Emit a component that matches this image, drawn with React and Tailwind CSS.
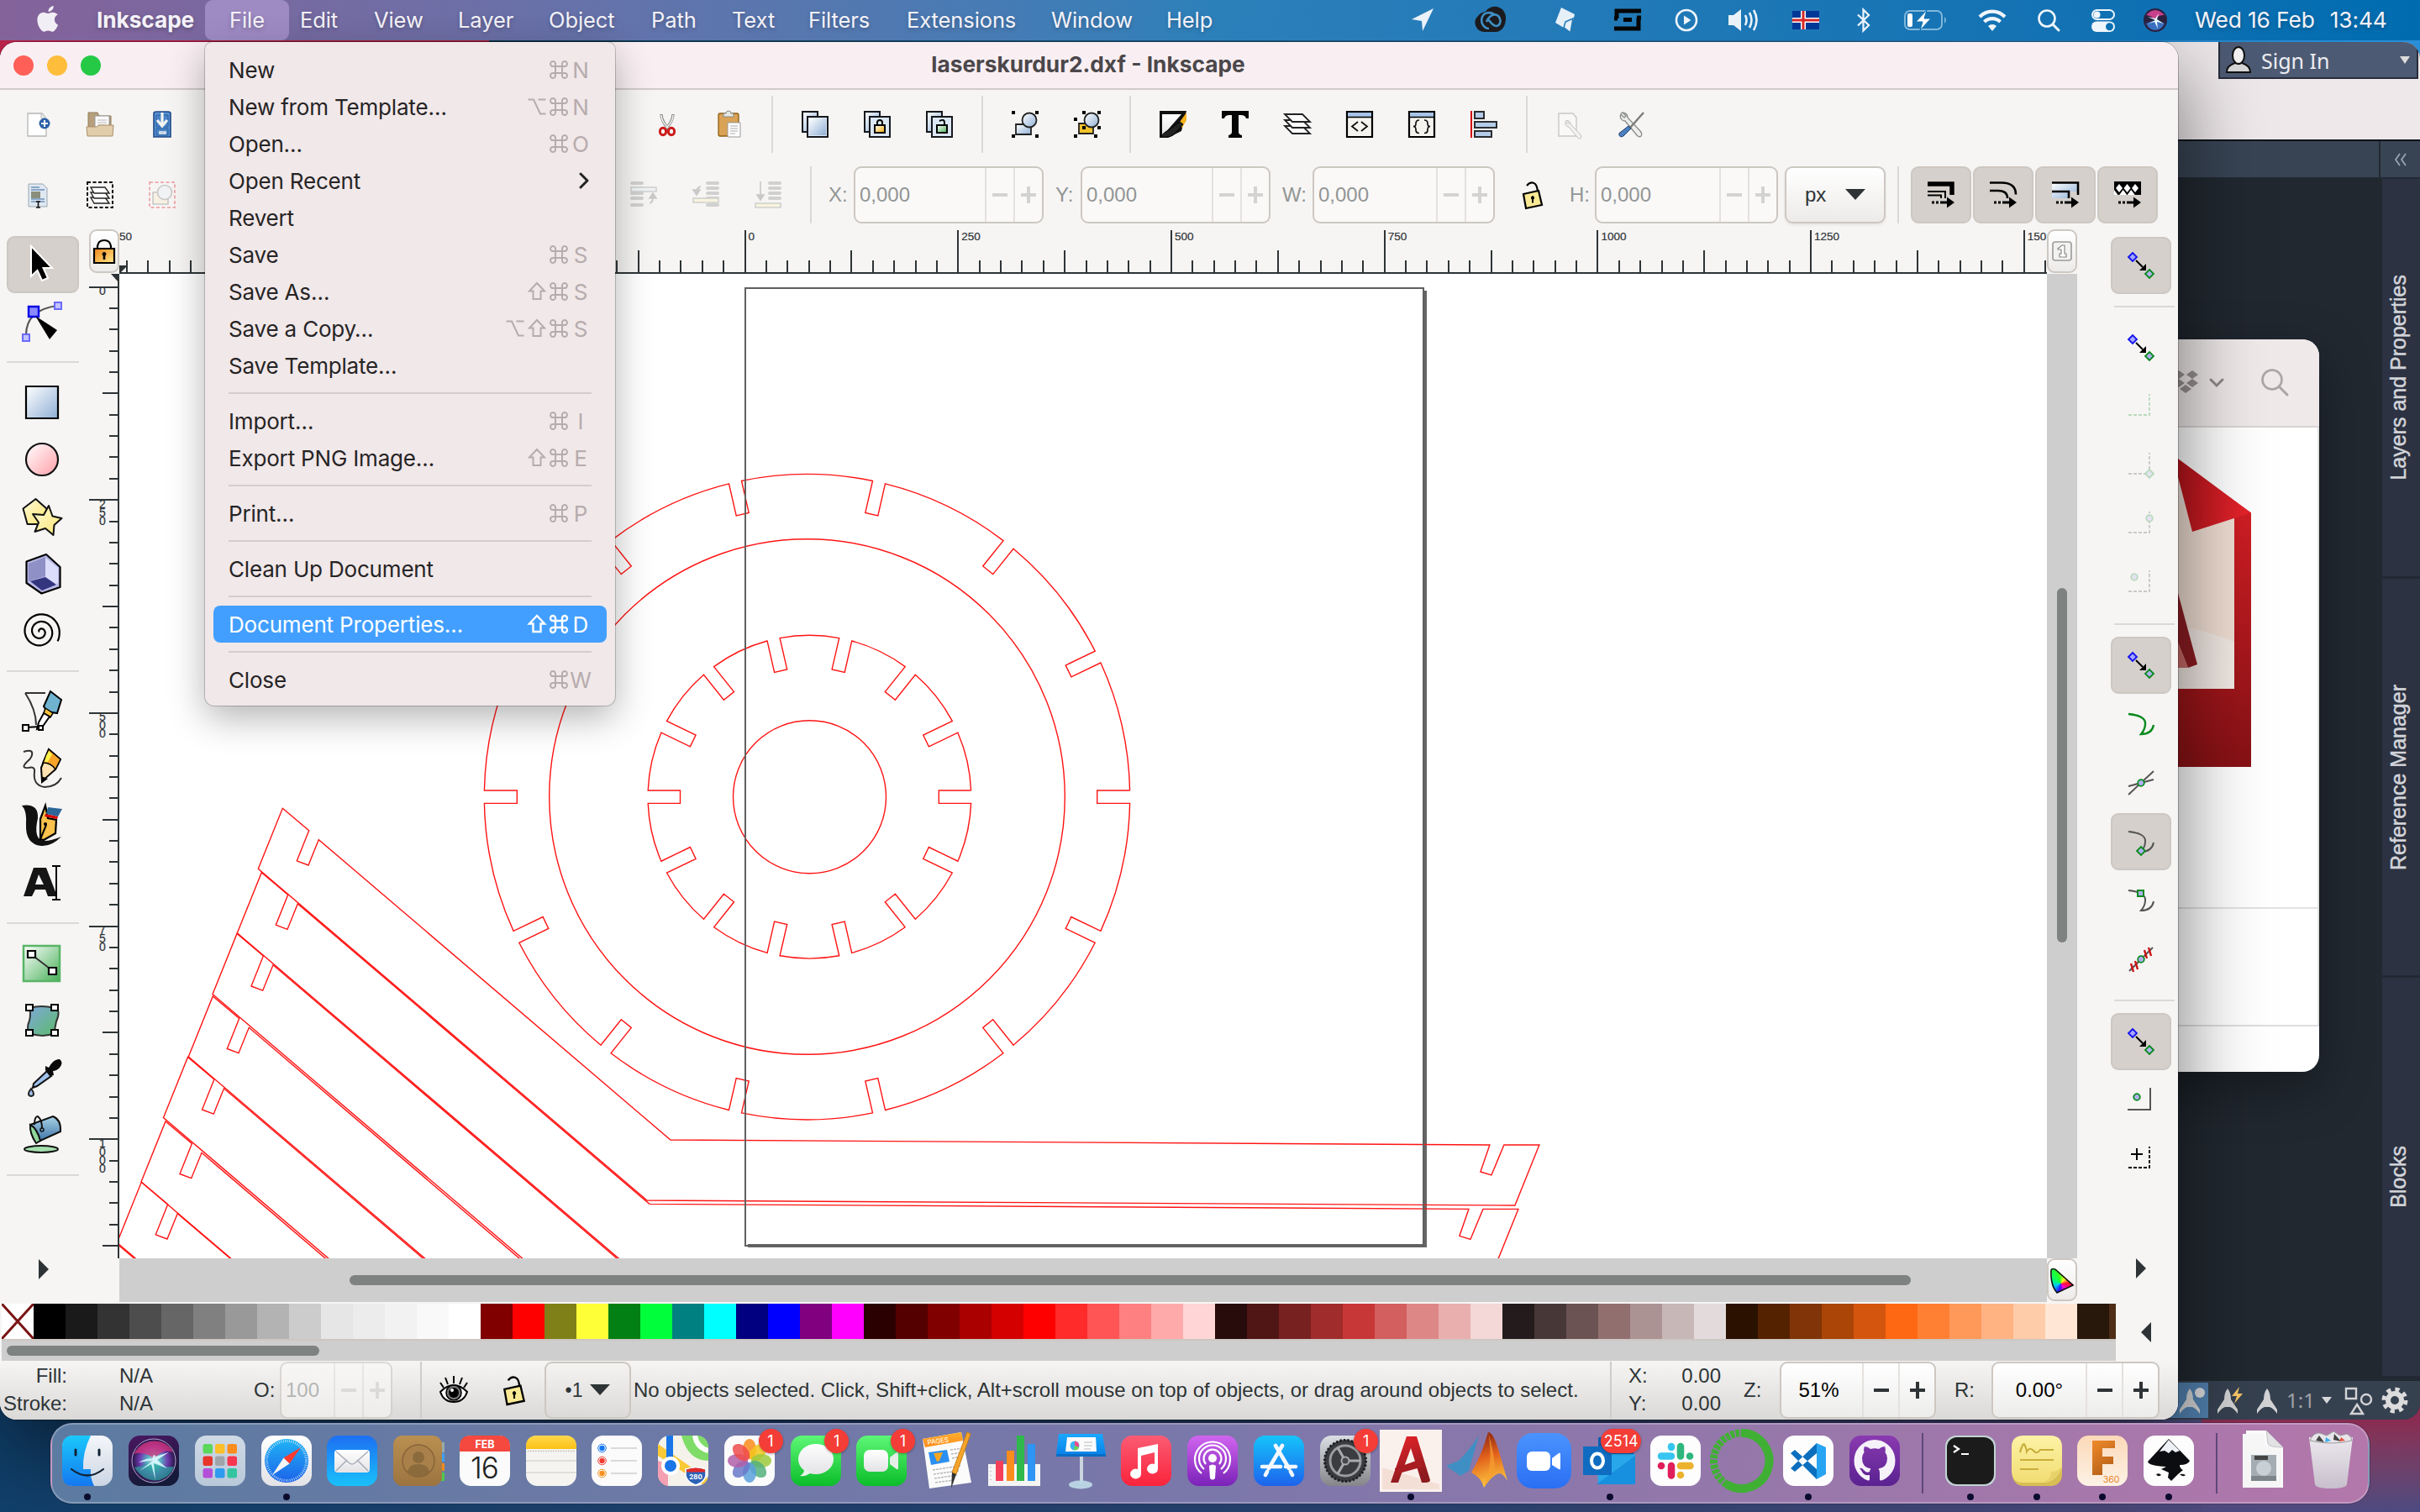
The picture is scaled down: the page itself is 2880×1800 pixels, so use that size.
import React from 'react';

/* ---------- helpers ---------- */
const Ico = ({ s = 32, vb, className = '', children }) => (
  <svg width={s} height={s} viewBox={vb || `0 0 ${s} ${s}`} className={'shrink-0 overflow-visible ' + className} fill="none">
    {children}
  </svg>
);

const G = ({ id, c, x2 = 0, y2 = 1 }) => (
  <linearGradient id={id} x1="0" y1="0" x2={x2} y2={y2}>
    {c.map((k, i) => (
      <stop key={i} offset={i / (c.length - 1)} stopColor={k} />
    ))}
  </linearGradient>
);

const Defs = () => (
  <svg className="absolute h-0 w-0">
    <defs>
      <G id="blueFace" c={['#ffffff', '#8fb0d6']} x2={1} />
      <G id="pinkFace" c={['#ffffff', '#ff9fa8']} x2={1} />
      <G id="yellowFace" c={['#fffbe0', '#fbe46a']} x2={1} />
      <G id="orangeFace" c={['#ffffff', '#f7a900']} x2={1} />
      <G id="lockFace" c={['#f0861a', '#ffe98a']} x2={1} />
      <G id="greenFace" c={['#ffffff', '#48b058']} x2={1} />
      <G id="meshFace" c={['#7fa8dc', '#5cbb68']} x2={1} />
      <G id="bucketFace" c={['#a9d3e6', '#3f74a8']} />
      <G id="finderL" c={['#1ac8fc', '#1478f0']} />
      <G id="finderR" c={['#f4f6fa', '#ccd6e4']} />
      <G id="siriBg" c={['#4a1762', '#151a38']} x2={0.3} />
      <G id="launch" c={['#cfdae6', '#b9c8d9']} />
      <G id="mail" c={['#1d6ff2', '#19c1fb']} />
      <G id="safari" c={['#1fb4f6', '#1d62e8']} />
      <G id="white" c={['#ffffff', '#e3e3e6']} />
      <G id="brown" c={['#b98f51', '#9c7440']} />
      <G id="green" c={['#5df777', '#0bbd29']} />
      <G id="note" c={['#ffd84d', '#fbc115']} />
      <G id="music" c={['#fb5c74', '#fa233b']} />
      <G id="pod" c={['#d165ef', '#7a22b8']} />
      <G id="store" c={['#15c4fb', '#1d63ec']} />
      <G id="gear" c={['#dadee2', '#86868a']} />
      <G id="zoom" c={['#4a93ff', '#2a6ff3']} />
      <G id="acad" c={['#e8232a', '#8d1a1e']} x2={0.3} />
      <G id="matlab" c={['#7a1c10', '#e2601b', '#fbc23c']} x2={0.2} />
      <G id="git" c={['#8a3ab0', '#5a2290']} />
      <G id="sticky" c={['#fdf3a6', '#f2dd74']} />
      <G id="fusion" c={['#fbd9b8', '#fdf2e6']} />
      <G id="fusionF" c={['#f08a2a', '#b8631a']} x2={0.5} />
      <G id="keynote" c={['#1aa8ff', '#0a84e8']} />
      <G id="pagesHead" c={['#ffb02e', '#ff8b1a']} />
      <G id="trash" c={['#f2f2f4', '#c9c6cf']} />
      <G id="redDoc" c={['#ea2229', '#8a1216']} x2={0.05} />
      <G id="redFold" c={['#b5141b', '#e5232b']} x2={1} y2={0.1} />
      <G id="paper" c={['#e6dad4', '#f4ebe6']} x2={1} />
      <radialGradient id="siri">
        <stop offset="0" stopColor="#fff" />
        <stop offset=".3" stopColor="#5fd0d8" />
        <stop offset=".65" stopColor="#7a3fc0" />
        <stop offset="1" stopColor="#20143c" />
      </radialGradient>
    </defs>
  </svg>
);

/* ---------- menu bar ---------- */
const MENUS = [
  ['Edit', 'w-[88px]'],
  ['View', 'w-[100px]'],
  ['Layer', 'w-[108px]'],
  ['Object', 'w-[122px]'],
  ['Path', 'w-[96px]'],
  ['Text', 'w-[91px]'],
  ['Filters', 'w-[117px]'],
  ['Extensions', 'w-[172px]'],
  ['Window', 'w-[137px]'],
  ['Help', 'w-[60px]'],
];

const StatusIcon = ({ w, children }) => <div className={'flex justify-center ' + w}>{children}</div>;

const MenuBar = () => (
  <header className="relative flex h-[48px] w-[2880px] items-center bg-linear-to-r from-[#84629a] via-[#2c80ba] via-50% to-[#006cb0] font-['Inter'] text-[25.500px] tracking-[-0.1px] text-[#f4f2f8] [text-shadow:0_2px_5px_rgba(0,0,0,0.25)]">
    <div className="flex w-[115px] justify-center">
      <Ico s={34}>
        <path fill="#f2eef6" d="M23.6 1c.2 2-.6 3.900-1.800 5.300-1.200 1.400-3.100 2.400-4.900 2.300-.2-1.900.7-3.900 1.800-5.100C19.900 2.100 22 1.100 23.600 1zM29 12.300c-.3.200-4.100 2.200-4.100 6.500 0 5 4.400 6.700 4.500 6.800 0 .1-.7 2.400-2.300 4.700-1.400 2-2.900 4.100-5.100 4.100s-2.800-1.300-5.400-1.300c-2.500 0-3.400 1.300-5.500 1.300s-3.500-1.900-5.100-4.200C4.100 27.400 2.600 23.200 2.600 19.300c0-6.400 4.200-9.800 8.300-9.800 2.200 0 4 1.400 5.400 1.400 1.300 0 3.300-1.500 5.800-1.500.9 0 4.400.1 6.900 2.900z" transform="translate(1 -1) scale(.92)" />
      </Ico>
    </div>
    <div className="w-[129px] text-[26.300px] font-bold tracking-[-0.1px]">Inkscape</div>
    <div className="flex h-[48px] w-[100px] items-center justify-center rounded-[9px] bg-[#9f8bc4]">File</div>
    <nav className="flex pl-[13px]">
      {MENUS.map(([t, w]) => (
        <div key={t} className={w}>{t}</div>
      ))}
    </nav>
    <div className="ml-[205px] flex items-center">
      <StatusIcon w="w-[80px]">
        <Ico s={30}><path d="M28 1 15 28l-1-12L2 14z" fill="#eaf1f8" /></Ico>
      </StatusIcon>
      <StatusIcon w="w-[82px]">
        <Ico s={38}>
          <path d="M12 33a11 11 0 0 1-8-19 12 12 0 0 1 9-5 13 13 0 0 1 24 8c0 9-5 16-12 16z" fill="#1b1b1f" />
          <path d="M24 13c-5-5-13-3-15 2-3 8 3 14 8 14M14 21c3-7 9-11 14-7 4 4 3 11-2 12-5 0-7-5-10-8" stroke="#3f8fc4" strokeWidth="2.600" />
        </Ico>
      </StatusIcon>
      <StatusIcon w="w-[94px]">
        <Ico s={32}>
          <path d="M12 1 28 9l-3 12-7-4-3 8-10-6z" fill="#e6f0f8" />
          <path d="m17 18 9-4-3 17-8-6z" fill="#e6f0f8" stroke="#247bb6" strokeWidth="1.600" />
        </Ico>
      </StatusIcon>
      <StatusIcon w="w-[56px]">
        <Ico s={32}><path d="M32 5H3v9M29 13v13H0M0 14h4M32 13h-5M11 15.500h10" stroke="#050505" strokeWidth="5" /></Ico>
      </StatusIcon>
      <StatusIcon w="w-[84px]">
        <Ico s={28}><circle cx="14" cy="14" r="12" stroke="#eef4fa" strokeWidth="2.600" /><path d="M11 8.500 19.500 14 11 19.500z" fill="#eef4fa" /></Ico>
      </StatusIcon>
      <StatusIcon w="w-[52px]">
        <Ico s={38}>
          <path d="M1 13h6l9-7v26l-9-7H1z" fill="#eaf2f9" />
          <path d="M21 13q3 6 0 12M26 10q5 9 0 18M31 7q7 12 0 24" stroke="#eaf2f9" strokeWidth="2.600" />
        </Ico>
      </StatusIcon>
      <StatusIcon w="w-[96px]">
        <Ico s={32}>
          <path fill="#003897" d="M0 5h32v22H0z" />
          <path stroke="#fff" strokeWidth="6" d="M13 5v22M0 16h32" />
          <path stroke="#d72828" strokeWidth="3" d="M13 5v22M0 16h32" />
        </Ico>
      </StatusIcon>
      <StatusIcon w="w-[42px]">
        <Ico s={28}><path d="M7 7.500 20 20l-6.500 6.500v-25L20 8 7 20.500" stroke="#eaf3fa" strokeWidth="2.300" /></Ico>
      </StatusIcon>
      <div className="flex w-[106px] justify-center">
        <svg width="54" height="26" viewBox="0 0 54 26" fill="none">
          <rect x="2" y="2" width="44" height="22" rx="6" stroke="#7fb8dc" strokeWidth="2" />
          <rect x="5" y="5" width="6" height="16" rx="2" fill="#fff" />
          <path d="M49 9q4 4 0 8z" fill="#7fb8dc" />
          <path d="M28 1 15 15h8l-3 10 13-14h-8z" fill="#fff" stroke="#0a70b2" strokeWidth="1" />
        </svg>
      </div>
      <StatusIcon w="w-[51px]">
        <Ico s={34}>
          <path d="M2 13a21 21 0 0 1 30 0" stroke="#f0f6fb" strokeWidth="4.200" />
          <path d="M7.500 19a13.500 13.500 0 0 1 19 0" stroke="#f0f6fb" strokeWidth="4.200" />
          <path d="M17 30l-5-6a7 7 0 0 1 10 0z" fill="#f0f6fb" />
        </Ico>
      </StatusIcon>
      <StatusIcon w="w-[83px]">
        <Ico s={28}><circle cx="12" cy="12" r="9.500" stroke="#eef5fb" strokeWidth="2.600" /><path d="m19 19 7 7" stroke="#eef5fb" strokeWidth="3" strokeLinecap="round" /></Ico>
      </StatusIcon>
      <StatusIcon w="w-[47px]">
        <Ico s={30}>
          <rect x="2" y="3" width="26" height="11" rx="5.500" stroke="#eef5fb" strokeWidth="2" />
          <circle cx="7.500" cy="8.500" r="4" fill="#eef5fb" />
          <rect x="1" y="16.500" width="28" height="12.500" rx="6.200" fill="#eef5fb" />
          <circle cx="22.500" cy="22.700" r="4.500" fill="#0b70b2" />
        </Ico>
      </StatusIcon>
      <StatusIcon w="w-[77px]">
        <Ico s={28}>
          <circle cx="14" cy="14" r="14" fill="#2a2140" />
          <path d="M3 8q11-12 22 0-8-1-11 6Q9 8 3 8z" fill="#c8408c" />
          <path d="M3 18q4 8 11 8t11-8q-6-2-11-4-6 2-11 4z" fill="#3a6fc0" />
          <path d="M14 14 5 10l9 2 4-6-2 7 8 5-8-2 1 8-4-8-7 2z" fill="#e8fbff" />
        </Ico>
      </StatusIcon>
      <div className="flex gap-[18px] pl-[9px] text-[26.300px] whitespace-nowrap"><span>Wed 16 Feb</span><span>13:44</span></div>
    </div>
  </header>
);

/* ---------- File menu ---------- */
const FILE_MENU = [
  ['New', '⌘N'],
  ['New from Template…', '⌥⌘N'],
  ['Open…', '⌘O'],
  ['Open Recent', '>'],
  ['Revert', ''],
  ['Save', '⌘S'],
  ['Save As…', '⇧⌘S'],
  ['Save a Copy…', '⌥⇧⌘S'],
  ['Save Template…', ''],
  null,
  ['Import…', '⌘I'],
  ['Export PNG Image…', '⇧⌘E'],
  null,
  ['Print…', '⌘P'],
  null,
  ['Clean Up Document', ''],
  null,
  ['Document Properties…', '⇧⌘D', true],
  null,
  ['Close', '⌘W'],
];

const KEY_GLYPHS = {
  '⌘': (
    <path d="M8 8h8v8H8zM8 8H5.500A3 3 0 1 1 8 5.500zM16 8V5.500A3 3 0 1 1 18.500 8zM8 16v2.500A3 3 0 1 1 5.500 16zM16 16h2.500a3 3 0 1 1-2.500 2.500z" />
  ),
  '⌥': <path d="M1.500 3.500H8L16 20.500h6.500M13.500 3.500h9" />,
  '⇧': <path d="M12 2 3 11.500h4.500V21h9v-9.500H21z" />,
};

const FileMenu = () => (
  <div className="absolute top-[50px] left-[244px] h-[790px] w-[488px] rounded-[11px] rounded-t-[9px] bg-[#f1e8e9] px-[10px] pt-[11px] font-['Inter'] text-[26px] text-[#262425] shadow-[0_0_0_1px_rgba(0,0,0,0.2),0_14px_44px_rgba(0,0,0,0.3)]">
    {FILE_MENU.map((m, i) =>
      m ? (
        <div key={i} className={'flex h-[44px] items-center rounded-[8px] pr-[18px] pl-[18px] ' + (m[2] ? 'bg-[#429fff] text-white' : '')}>
          <span className="flex-1 tracking-[-0.18px]">{m[0]}</span>
          {m[1] === '>' ? (
            <Ico s={20} className="-mr-[2px]"><path d="m7 2 8 8-8 8" stroke="#222" strokeWidth="3" strokeLinecap="round" strokeLinejoin="round" transform="translate(-2)" /></Ico>
          ) : (
            [...m[1]].map((k, j) => (
              <span key={j} className={'flex w-[26px] justify-center ' + (m[2] ? 'text-white' : 'text-[#b6acad]')}>
                {KEY_GLYPHS[k] ? (
                  <svg width="24" height="24" viewBox="0 0 24 24" fill="none" stroke="currentColor" strokeWidth={m[2] ? 2.400 : 2}>{KEY_GLYPHS[k]}</svg>
                ) : k}
              </span>
            ))
          )}
        </div>
      ) : (
        <div key={i} className="flex h-[22px] items-center px-[18px]">
          <div className="h-[2px] w-full bg-[#d6cccd]" />
        </div>
      )
    )}
  </div>
);

/* ---------- command toolbar ---------- */
const Cell = ({ children, dim }) => (
  <div className={'flex w-[74px] justify-center ' + (dim ? 'opacity-35' : '')}>{children}</div>
);
const VSep = () => (
  <div className="flex w-[28px] justify-center">
    <div className="h-[68px] w-[2px] bg-[#dbd9d6]" />
  </div>
);

const Wrench = ({ c = '#8a8c8a' }) => (
  <path d="M3 3c3-2 8 0 8 5l15 16q3 4 1 6t-5-1L8 12C4 12 1 8 3 4l4 4 2-2-4-4z" fill="#eeeeec" stroke={c} strokeWidth="1.300" />
);

const DupBase = () => (
  <>
    <path d="M1 1h18v24H1z" fill="url(#blueFace)" stroke="#16181c" strokeWidth="2" />
    <path d="M7 7h24v24H7z" fill="#dbe7f4" stroke="#16181c" strokeWidth="2" />
  </>
);

const Marks = ({ pts, c = '#000' }) => pts.map(([x, y], i) => <path key={i} d={`M${x - 2} ${y - 2}h4v4h-4z`} fill={c} />);

const CommandBar = () => (
  <div className="flex h-[82px] shrink-0 items-center pl-[8px]">
    <Cell>
      <Ico>
        <path d="M4 3h17l5 6v21H4z" fill="#fff" stroke="#b5b7b3" strokeWidth="1.300" />
        <path d="M20 3v6h6" fill="#eee" stroke="#b5b7b3" />
        <circle cx="24" cy="15" r="6.500" fill="#2c62a8" />
        <path d="M20 15h8M24 11v8" stroke="#fff" strokeWidth="2" />
      </Ico>
    </Cell>
    <Cell>
      <Ico>
        <path d="M2 2h11l2 4h14v23H2z" fill="#b79f7c" stroke="#8f7a59" />
        <path d="M10 6h17v18H10z" fill="#fafafa" stroke="#999" />
        <path d="M13 11h11M13 14h11M13 17h9" stroke="#b5b5b5" strokeWidth="1.200" />
        <path d="M0 19h12l3-2h17l-1 13H1z" fill="#e2cdab" stroke="#a98f66" />
      </Ico>
    </Cell>
    <Cell>
      <Ico>
        <path d="M6 3q0-2 3-2h14q3 0 3 2v28H6z" fill="#5590d0" stroke="#1f4a87" strokeWidth="1.600" />
        <path d="M9 5h14v14H9zM9 21h14v8H9z" fill="#4a85c8" stroke="#2c5f9e" />
        <path d="M13 25v2h7v-2z" stroke="#eee" strokeWidth="1.500" />
        <path d="M16 2v14M10 11l6 7 6-7" stroke="#f4f4f2" strokeWidth="3.200" />
      </Ico>
    </Cell>
    <div className="w-[527px]" />
    <Cell>
      <Ico>
        <path d="M9 4q0 8 9 18M23 4q0 8-9 18" stroke="#8b8e8b" strokeWidth="3.400" />
        <path d="M9 5q0 8 9 16M23 5q0 8-9 16" stroke="#eeeeec" strokeWidth="1.600" />
        <ellipse cx="11" cy="24.500" rx="3.600" ry="4.300" stroke="#cc1a1a" strokeWidth="3" />
        <ellipse cx="21" cy="24.500" rx="3.600" ry="4.300" stroke="#cc1a1a" strokeWidth="3" />
      </Ico>
    </Cell>
    <Cell>
      <Ico>
        <rect x="3" y="3" width="24" height="27" rx="2" fill="#d9a256" stroke="#8f5d12" strokeWidth="1.300" />
        <path d="M9 7V3h3q0-3 3-3t3 3h3v4z" fill="#e6e6e3" stroke="#888a85" />
        <path d="M14 14h15v17H14z" fill="#fff" stroke="#999" />
        <path d="M17 18h9M17 21h9M17 24h9M17 27h6" stroke="#aaa" strokeWidth="1.200" />
      </Ico>
    </Cell>
    <VSep />
    <Cell><Ico><DupBase /><path d="M9 9h20v20H9z" fill="url(#blueFace)" /></Ico></Cell>
    <Cell>
      <Ico>
        <DupBase />
        <path d="M16 17v-3q0-3 3-3t3 3v3" stroke="#000" strokeWidth="2" />
        <path d="M13 17h12v9H13z" fill="url(#orangeFace)" stroke="#000" strokeWidth="2" />
      </Ico>
    </Cell>
    <Cell>
      <Ico>
        <DupBase />
        <path d="M16 12q6-3 6 2v3" stroke="#000" strokeWidth="2" />
        <path d="M13 17h12v9H13z" fill="url(#greenFace)" stroke="#000" strokeWidth="2" />
      </Ico>
    </Cell>
    <VSep />
    <Cell>
      <Ico>
        <path d="M5 16h18v12H5z" fill="url(#blueFace)" stroke="#222" strokeWidth="1.800" />
        <circle cx="21" cy="11" r="8.500" fill="url(#blueFace)" stroke="#222" strokeWidth="1.800" />
        <Marks pts={[[2, 2], [30, 2], [2, 30], [30, 30]]} />
      </Ico>
    </Cell>
    <Cell>
      <Ico>
        <path d="M6 15h17v12H6z" fill="#f3c32c" stroke="#222" strokeWidth="1.800" />
        <circle cx="21" cy="11" r="8.500" fill="url(#blueFace)" stroke="#222" strokeWidth="1.800" />
        <Marks pts={[[12, 2], [30, 2], [2, 10], [12, 20], [30, 20], [2, 30], [26, 30]]} />
      </Ico>
    </Cell>
    <VSep />
    <Cell>
      <Ico>
        <path d="M0 0h32l-6 24L10 32H0z" fill="#111" />
        <path d="M3 4h23L12 20 3 30z" fill="url(#white)" />
        <path d="M32 2 22 16l5 4 5-9z" fill="#f5b21c" />
        <path d="M24 13 12 22Q4 26 1 31q14 2 19-6l8-9z" fill="#222" stroke="#000" />
      </Ico>
    </Cell>
    <Cell><Ico><path d="M0 0h32v9h-3q-1-4-6-4h-3v20q0 3 4 4v3H8v-3q4-1 4-4V5H9Q4 5 3 9H0z" fill="#050505" /></Ico></Cell>
    <Cell>
      <Ico>
        {[18, 11, 4].map((y) => (
          <path key={y} d={`M1 ${y}h21l9 9H10z`} fill="#fbfbfb" stroke="#222" strokeWidth="1.800" />
        ))}
      </Ico>
    </Cell>
    <Cell>
      <Ico>
        <path d="M1 1h30v30H1z" fill="#f4f3ee" stroke="#000" strokeWidth="2.200" />
        <path d="M2 2h28v5H2z" fill="#a8c4e6" /><path d="M0 7.500h32" stroke="#000" strokeWidth="1.500" />
        <path d="m14 13-7 5.500 7 5.500M18 13l7 5.500-7 5.500" stroke="#111" strokeWidth="1.800" />
      </Ico>
    </Cell>
    <Cell>
      <Ico>
        <path d="M1 1h30v30H1z" fill="#f4f3ee" stroke="#000" strokeWidth="2.200" />
        <path d="M2 2h28v5H2z" fill="#a8c4e6" /><path d="M0 7.500h32" stroke="#000" strokeWidth="1.500" />
        <path d="M13 11q-4 0-4 4t-3 3.500q3 0 3 4t4 4M19 11q4 0 4 4t3 3.500q-3 0-3 4t-4 4" stroke="#111" strokeWidth="1.700" />
      </Ico>
    </Cell>
    <Cell>
      <Ico>
        <path d="M1 0v32" stroke="#d40000" strokeWidth="2" />
        <path d="M5 1h11v8H5zM5 13h26v7H5zM5 24h20v7H5z" fill="#b4cce8" stroke="#2a2c30" strokeWidth="2" />
      </Ico>
    </Cell>
    <VSep />
    <Cell dim>
      <Ico><path d="M3 3h17l4 5v22H3z" fill="#fff" stroke="#777" strokeWidth="1.400" /><g transform="translate(9 10) scale(.75)"><Wrench c="#555" /></g></Ico>
    </Cell>
    <Cell>
      <Ico>
        <Wrench />
        <path d="M30 2 14 20" stroke="#7a7c7a" strokeWidth="2.400" />
        <path d="m12 18 3 3-9 9q-4 2-5-1t2-4z" fill="#4c80bf" stroke="#20406f" />
      </Ico>
    </Cell>
  </div>
);

/* ---------- tool controls bar ---------- */
const Spin = ({ w, value, dim, btn, align = 'pl-[5px]' }) => (
  <div className={`flex h-[68px] shrink-0 rounded-[9px] border-2 border-[#cdc7c2] ${w} ${dim ? 'bg-[#faf9f8] text-[#929595]' : 'bg-linear-to-b from-white to-[#ececeb] text-black'}`}>
    <div className={'flex flex-1 items-center ' + align}>{value}</div>
    {['M0 8h18', 'M0 8h18M9-2v20'].map((d, i) => (
      <div key={i} className={`flex items-center justify-center border-l-2 border-[#e4e1de] ${btn}`}>
        <svg width="20" height="16" viewBox="-1 0 20 16" className="overflow-visible"><path d={d} stroke={dim ? '#d3d3d1' : '#2e3436'} strokeWidth="4" /></svg>
      </div>
    ))}
  </div>
);

const Padlock = ({ s = 32 }) => (
  <Ico s={s} vb="0 0 32 32">
    <path d="M9 5q5-6 10-2 3 3 3 12" stroke="#000" strokeWidth="2.200" />
    <path d="m5 15 18-4 4 17-19 4z" fill="#fae994" stroke="#000" strokeWidth="2.200" />
    <path d="M16 17a2.500 2.500 0 0 1 1 4.500v4h-2v-4a2.500 2.500 0 0 1 1-4.500z" fill="#000" />
  </Ico>
);

const Toggle = ({ children }) => (
  <div className="flex h-[68px] w-[72px] items-center justify-center rounded-[9px] border-2 border-[#cdc7c2] bg-[#d5d0cc]">
    <Ico>
      {children}
      <path d="M5 25h3M10 25h3M15 25h10" stroke="#000" strokeWidth="3" />
      <path d="m23 18.500 9 6.500-9 6.500z" fill="#000" />
    </Ico>
  </div>
);

const RaiseLower = ({ flip, end }) => (
  <Ico>
    {[2, 8, 14, 20, 28].map((y) => (
      <path key={y} d={`M${flip ? 18 : 2} ${y}h12`} stroke="#8b8e8c" strokeWidth="4" strokeLinecap="round" />
    ))}
    <path d={`M1 ${end ? 26 : flip ? 20 : 7}h30v5H1z`} fill={flip ? '#fbf0b4' : '#e3edf8'} stroke="#8b8e8c" strokeWidth="1.600" />
    {flip ? <path d={end ? 'M7 0v18M3 16l4 6 4-6z' : 'M10 6q-5 1-5 6M1 10l4 6 4-6z'} stroke="#777" strokeWidth="1.600" fill="#777" /> : <path d="M23 26q4-1 4-6M23 20l4-6 4 6z" stroke="#777" strokeWidth="1.600" fill="#777" />}
  </Ico>
);

const ControlsBar = () => (
  <div className="flex h-[84px] shrink-0 items-center pt-[2px] pl-[8px] font-['Liberation_Sans'] text-[24px] text-[#929595]">
    <Cell>
      <Ico>
        <path d="M5 3h17l5 5v22H5z" fill="#dfe8f0" stroke="#9aa7b5" />
        <path d="M8 7h10M8 10h16M8 21h16M8 24h16" stroke="#88a7c8" strokeWidth="2" />
        <path d="M8 12h11v8H8z" fill="#8a8f7c" />
        <path d="M14 24h5M14 31h5M16.500 24v7" stroke="#111" strokeWidth="1.600" />
      </Ico>
    </Cell>
    <Cell>
      <Ico>
        <path d="M1 1h30v30H1z" stroke="#000" strokeWidth="2" strokeDasharray="4 2.500" />
        {[19, 13, 7].map((y) => (
          <path key={y} d={`M5 ${y}h17l5 7H9z`} fill="#fff" stroke="#222" strokeWidth="1.400" />
        ))}
      </Ico>
    </Cell>
    <Cell dim>
      <Ico>
        <path d="M1 1h30v30H1z" stroke="#e0323a" strokeWidth="2" strokeDasharray="4 2.500" />
        <path d="M5 13h18v14H5z" fill="#f7ecc0" stroke="#777" strokeWidth="1.600" />
        <circle cx="19" cy="13" r="8.500" fill="#e6edf4" stroke="#777" strokeWidth="1.600" />
      </Ico>
    </Cell>
    <div className="w-[499px]" />
    <Cell dim><RaiseLower /></Cell>
    <Cell dim><RaiseLower flip /></Cell>
    <Cell dim><RaiseLower flip end /></Cell>
    <VSep />
    <span className="w-[37px] pl-[7px]">X:</span>
    <Spin w="w-[226px]" btn="w-[34px]" value="0,000" dim />
    <span className="w-[44px] pl-[14px]">Y:</span>
    <Spin w="w-[226px]" btn="w-[34px]" value="0,000" dim />
    <span className="w-[50px] pl-[14px]">W:</span>
    <Spin w="w-[217px]" btn="w-[34px]" value="0,000" dim />
    <div className="flex w-[89px] justify-center"><Padlock /></div>
    <span className="w-[30px]">H:</span>
    <Spin w="w-[218px]" btn="w-[34px]" value="0,000" dim />
    <div className="ml-[8px] flex h-[68px] w-[120px] items-center justify-between rounded-[9px] border-2 border-[#cdc7c2] bg-linear-to-b from-white to-[#edebe9] pr-[22px] pl-[22px] text-[#2e3436] shadow-[0_2px_3px_rgba(0,0,0,0.07)]">
      px
      <svg width="24" height="14" viewBox="0 0 24 14"><path d="M0 0h24L12 13z" fill="#2e3436" /></svg>
    </div>
    <div className="flex w-[30px] justify-center"><div className="h-[68px] w-[2px] bg-[#dbd9d6]" /></div>
    <div className="flex gap-[2px]">
      <Toggle><path d="M0 3h29v13" stroke="#000" strokeWidth="5.500" /><path d="M0 12h21v8M0 16.500h16V20" stroke="#000" strokeWidth="2" /></Toggle>
      <Toggle><path d="M0 1.500h14q17 0 17 14M0 11h10q11 0 11 9" stroke="#000" strokeWidth="2.600" /></Toggle>
      <Toggle><path d="M0 1.500h31V12H20v8H0z" fill="url(#blueFace)" /><path d="M0 1.500h31V16M0 12h20v8" stroke="#000" strokeWidth="2.600" /></Toggle>
      <Toggle>
        <path d="M0 0h32v16H0z" fill="#000" />
        <path d="m6 3 4 5-4 5-4-5zM15.500 3l4 5-4 5-4-5zM25 3l4 5-4 5-4-5zM0 10l4.500 6H0zM10.700 10l4.500 6h-9zM20.200 10l4.500 6h-9z" fill="#fff" />
      </Toggle>
    </div>
  </div>
);

/* ---------- rulers and canvas ---------- */
const UNIT = 25.37;
const ORIGIN_X = 886.6;
const ORIGIN_Y = 341.5;

const HRuler = () => (
  <svg width="2294" height="54" viewBox="142 272 2294 54" className="shrink-0">
    <path d="M142 325h2294" stroke="#2e3436" strokeWidth="2" />
    {Array.from({ length: 91 }, (_, i) => i - 29).map((n) => {
      const x = Math.round(ORIGIN_X + n * UNIT);
      const top = n % 10 === 0 ? 274 : n % 5 === 0 ? 298 : 310;
      return <path key={n} d={`M${x} ${top}V324`} stroke="#2e3436" strokeWidth="2" />;
    })}
    {[[0, '0'], [250, '250'], [500, '500'], [750, '750'], [1000, '1000'], [1250, '1250'], [1500, '150']].map(([v, label]) => (
      <text key={v} x={ORIGIN_X + (v / 25) * UNIT + 4} y="286" fontSize="13.500" fill="#2e3436" stroke="#2e3436" strokeWidth=".2" fontFamily="Liberation Sans">{label}</text>
    ))}
    <text x="142" y="286" fontSize="13.500" fill="#2e3436" stroke="#2e3436" strokeWidth=".2" fontFamily="Liberation Sans">50</text>
    <path d="M142 316h10l-10 10z" fill="#2e3436" />
  </svg>
);

const VRuler = () => (
  <svg width="36" height="1172" viewBox="106 326 36 1172" className="shrink-0">
    <path d="M141 326v1172" stroke="#2e3436" strokeWidth="2" />
    {Array.from({ length: 46 }, (_, n) => n).map((n) => {
      const y = Math.round(ORIGIN_Y + n * UNIT);
      const left = n % 10 === 0 ? 106 : n % 5 === 0 ? 122 : 130;
      return <path key={n} d={`M${left} ${y}H141`} stroke="#2e3436" strokeWidth="2" />;
    })}
    {['0', '250', '500', '750', '1000'].map((label) => {
      const chars = [...label];
      const y0 = ORIGIN_Y + (Number(label) / 25) * UNIT + 9.5;
      return (
        <text key={label} x={chars.map(() => 118).join(' ')} y={chars.map((_, i) => y0 + i * 10).join(' ')} fontSize="14" fill="#2e3436" stroke="#2e3436" strokeWidth=".2" fontFamily="Liberation Sans">{label}</text>
      );
    })}
    <path d="M132 326h9v10z" fill="#2e3436" />
  </svg>
);

const gearPath = (cx, cy, r, depth) => {
  const h = 7.7;
  const count = 14;
  const a = Math.asin(h / r);
  let d = '';
  for (let i = 0; i < count; i++) {
    const t = (i * 2 * Math.PI) / count;
    const c = Math.cos(t);
    const s = Math.sin(t);
    const at = (x, y) => `${(cx + x * c - y * s).toFixed(1)} ${(cy + x * s + y * c).toFixed(1)}`;
    const edge = r * Math.cos(a);
    d += (i ? `A${r} ${r} 0 0 1 ` : 'M') + at(edge, -h) + 'L' + at(r - depth, -h) + 'L' + at(r - depth, h) + 'L' + at(edge, h);
  }
  return d + `A${r} ${r} 0 0 1 ${(cx + r * Math.cos(a)).toFixed(1)} ${cy - h}`;
};

const STRIPS = [[336.3, 962.3], [311.3, 1038.7], [282, 1111.5], [253.3, 1186], [223.5, 1258.5], [197, 1335], [168.3, 1407.3], [139.500, 1481]];

const stripPath = ([x, y]) =>
  `M${x} ${y}l31.400 26.500-14.400 36 13.700 5.200 12.300-30.400L${x + 461.6} ${y + 394.7}l975 6-11 32 13 4 15-36h42l-29 72-1033-6L${x - 29} ${y + 72}z`;

const Canvas = () => (
  <svg width="2294" height="1172" viewBox="142 326 2294 1172" className="shrink-0 bg-white" fill="none">
    <path d="M1694 346h4v1139H890v-4h804z" fill="#666" />
    <g stroke="#ff1414" strokeWidth="1.400">
      <path d={gearPath(960.5, 948.7, 384.2, 39)} />
      <circle cx="960.5" cy="948.500" r="306.800" />
      <path d={gearPath(963.4, 948.7, 192.4, 38.5)} />
      <circle cx="963.500" cy="948.700" r="91" />
      {STRIPS.map((p) => (
        <path key={p[0]} d={stripPath(p)} />
      ))}
    </g>
    <path d="M887 343h807v1140H887z" stroke="#5f5f5f" strokeWidth="2" />
  </svg>
);

const SmallButton = ({ h, children }) => (
  <div className={`flex w-[36px] items-center justify-center rounded-[9px] border-2 border-[#cdc7c2] bg-linear-to-b from-white to-[#edebe9] ${h}`}>{children}</div>
);

/* ---------- toolbox ---------- */
const HSep = ({ w }) => (
  <div className="flex h-[28px] items-center justify-center"><div className={'h-[2px] bg-[#dbd9d6] ' + w} /></div>
);

const spiral = Array.from({ length: 120 }, (_, i) => {
  const t = i / 119;
  const a = 0.5 - (1 - t) * Math.PI * 2 * 2.6;
  const r = 1 + 22.5 * t;
  return `${(22 + r * Math.cos(a)).toFixed(1)} ${(25 + r * Math.sin(a)).toFixed(1)}`;
}).join('L');

const TOOLS = [
  <path d="M11 2v36l7.500-7 5.500 12 7-3-5.500-12H36z" fill="#000" stroke="#fff" strokeWidth="2" />,
  <>
    <path d="M5 40Q5 10 42 5" stroke="#555" strokeWidth="2.200" />
    <path d="M8 6h12v12H8z" fill="#8a8aff" stroke="#0000e6" strokeWidth="2.400" />
    <path d="M39 1h8v8h-8zM1 39h8v8H1z" fill="#c3c3ff" stroke="#6a6aff" strokeWidth="2" />
    <path d="m16 17 26 17-9 11z" fill="#000" />
  </>,
  null,
  <path d="M5 5h38v38H5z" fill="url(#blueFace)" stroke="#000" strokeWidth="2.200" />,
  <circle cx="24" cy="24" r="19" fill="url(#pinkFace)" stroke="#111" strokeWidth="2.200" />,
  <g fill="url(#yellowFace)" stroke="#111" strokeWidth="2" strokeLinejoin="round">
    <path d="M16.500 3 1.500 14.500 6.600 33H22l8-18z" />
    <path d="m32 11 4.500 12.500 11 2.500-9 8-1 12-9.500-8L15.500 42 20 31l-7-10 13 1z" />
  </g>,
  <g strokeLinejoin="round">
    <path d="m29 1 16.500 15v24l-22 7.500L5.500 35V9.500z" fill="#b9b9e6" stroke="#000" strokeWidth="2.200" />
    <path d="M28 5v23l13 9 2-3V17z" fill="#dcdcfb" />
    <path d="m8 12 20-8v23L8 33z" fill="#8f90c6" />
    <path d="m28 28 13 9-17 7-14-11z" fill="#33357f" />
  </g>,
  <path d={'M' + spiral} stroke="#000" strokeWidth="2.200" />,
  null,
  <>
    <path d="M4 2h24M4 2q13 20 13 38" stroke="#333" strokeWidth="2" />
    <path d="m34 0 13 10-5 16-12-2-4-6z" fill="#6fb3cf" stroke="#000" strokeWidth="2" />
    <path d="m28 20 9 6-3 5-8-5z" fill="#f5c13a" stroke="#000" strokeWidth="1.500" />
    <path d="m26 26 7 4-9 13-6 2 2-8z" fill="#fff" stroke="#000" strokeWidth="2" />
    <path d="M4 43l18-1" stroke="#000" strokeWidth="2" />
    <path d="M1 40h7v7H1zM20 41h5v5h-5z" fill="#fff" stroke="#000" strokeWidth="2" />
  </>,
  <>
    <path d="M2 4q12-4 10 4-1 4-6 8-8 8 2 7 8-2 7 5-2 16 12 18 14 0 20-11" stroke="#333" strokeWidth="2" />
    <path d="m32 1 14 12-6 12-16 14-1-16z" fill="#ffe2b0" stroke="#000" strokeWidth="2" />
    <path d="m32 1 14 12-6 12q-5-8-15-8z" fill="#f8a428" stroke="#000" strokeWidth="1.500" />
    <path d="M32 3q-4 6-5 13h4l5-9z" fill="#fff04a" />
    <path d="M23 33v9l8-6z" fill="#000" />
  </>,
  <>
    <path d="M0 0q20-3 19 15-6 26 8 27 8 0 20-5-12 12-24 11Q4 46 5 22 6 6 0 0z" fill="#111" />
    <path d="m28 0-6 16v24l4 1 14-8 1-16-10-2z" fill="#fac24c" stroke="#000" strokeWidth="2.200" />
    <path d="M31 2l17 2-5 9-14-3z" fill="#2d6699" />
    <path d="M28 10l15 3-1 3-15-3z" fill="#d40000" />
    <path d="m22 40 7-17" stroke="#000" strokeWidth="2" /><circle cx="28" cy="22" r="2" fill="#000" />
  </>,
  <>
    <path d="M14 6h15l13 34H31l-3-8H16l-4 8H2zM20 14l-4 12h10z" fill="#151515" fillRule="evenodd" />
    <path d="M36 4h10M36 44h10M41 4v40" stroke="#000" strokeWidth="2" />
  </>,
  null,
  <>
    <path d="M2 3h43v42H2z" fill="url(#greenFace)" stroke="#58b565" strokeWidth="2.500" />
    <path d="m11 13 26 20" stroke="#333" strokeWidth="2" />
    <path d="M7 9h9v8H7zM32 29h9v8h-9z" fill="#fff" stroke="#000" strokeWidth="2.200" />
  </>,
  <>
    <path d="M9 9q14-4 30 0 8 2 2 16-2 8-2 14-14 6-30 0-4-6 0-15 2-8 0-15z" fill="url(#meshFace)" stroke="#333" strokeWidth="2" />
    <path d="M5 5h8v7H5zM35 5h8v7h-8zM5 35h8v7H5zM35 35h8v7h-8z" fill="#fff" stroke="#000" strokeWidth="2" />
  </>,
  <>
    <path d="m30 16 5 6-17 12-5 2 1-5z" fill="#9fc1ec" stroke="#111" strokeWidth="2" />
    <path d="M28 10l4 2Q38 1 45 2q5 4 0 10-4 4-8 4l1 5-5 1-5-7z" fill="#0a0a0a" />
    <path d="M11 37q-6 8 0 9 6-1 0-9z" fill="#9fc1ec" stroke="#222" strokeWidth="2" />
  </>,
  <>
    <path d="M10 12 37 2q10 4 9 18L22 31q-6-10-12-19z" fill="url(#bucketFace)" stroke="#111" strokeWidth="2" />
    <path d="M10 12q8 4 12 19l-5 3q-8-12-7-22z" fill="#8fd69b" stroke="#111" strokeWidth="2" />
    <path d="M15 12q0-10 4-10 5 4 5 14" stroke="#111" strokeWidth="2" />
    <ellipse cx="23" cy="41" rx="20" ry="4" fill="#a5dfae" stroke="#111" strokeWidth="2" />
    <circle cx="24" cy="18" r="2" stroke="#111" strokeWidth="1.500" />
  </>,
  null,
];

const Toolbox = () => (
  <div className="flex w-[106px] flex-col items-start pt-[9px] pl-[8px]">
    {TOOLS.map((t, i) =>
      t ? (
        <div key={i} className={'flex h-[68px] w-[86px] items-center justify-center ' + (i === 0 ? 'rounded-[9px] border-2 border-[#cdc7c2] bg-[#d5d0cc]' : '')}>
          <Ico s={48} className="-ml-[2px]">{t}</Ico>
        </div>
      ) : (
        <HSep key={i} w="w-[86px]" />
      )
    )}
    <svg width="12" height="24" viewBox="0 0 12 24" className="mt-[86px] ml-[38px]"><path d="M0 0l12 12L0 24z" fill="#2e3436" /></svg>
  </div>
);

/* ---------- snap bar ---------- */
const Diamond = ({ x, y, c }) => <path d={`M${x} ${y - 5}l5 5-5 5-5-5z`} fill={c === '#0a8a1e' ? '#b0b0f0' : '#a6a6ff'} stroke={c} strokeWidth="1.800" />;
const Dot = ({ x, y }) => <circle cx={x} cy={y} r="3.800" fill="#b0b0f0" stroke="#0a8a1e" strokeWidth="1.800" />;
const SnapMaster = () => (
  <>
    <Diamond x={6} y={6} c="#1010f0" />
    <path d="m10 10 8 8" stroke="#000" strokeWidth="2" /><path d="M22 22h-8l8-8z" fill="#000" />
    <Diamond x={26} y={26} c="#0a8a1e" />
  </>
);
const Corner = ({ c = '#444' }) => <path d="M1 26h25V1" stroke={c} strokeWidth="1.800" strokeDasharray="4 2" />;
const CURVE = 'M1 4Q22 6 21 16 21 22 16 28 29 28 31 17';

const SNAPS = [
  ['on', <SnapMaster />],
  null,
  ['', <SnapMaster />],
  ['dim', <Corner c="#0a8a1e" />],
  ['dim', <><Corner /><Diamond x={26} y={26} c="#0a8a1e" /></>],
  ['dim', <><Corner /><Dot x={26} y={9} /></>],
  ['dim', <><Corner /><Dot x={8} y={9} /></>],
  null,
  ['on', <SnapMaster />],
  ['', <path d={CURVE} stroke="#0a8a1e" strokeWidth="2.400" />],
  ['', <><path d="M1 30 31 2M1 20l30-8" stroke="#555" strokeWidth="2" /><Dot x={16} y={16} /></>],
  ['on', <><path d={CURVE} stroke="#555" strokeWidth="2" /><Diamond x={16} y={27} c="#0a8a1e" /></>],
  ['', <><path d={CURVE} stroke="#555" strokeWidth="2" /><path d="M12 4h7v7h-7z" fill="#b0b0f0" stroke="#0a8a1e" strokeWidth="2" /></>],
  ['', <><path d="M2 30 30 2" stroke="#555" strokeWidth="2" /><path d="m4 21 3 10M9 18l3 10M20 5l3 10M25 2l3 10" stroke="#cc1111" strokeWidth="2.400" /><Dot x={16} y={16} /></>],
  null,
  ['on', <SnapMaster />],
  ['', <><path d="M0 27h27V1" stroke="#555" strokeWidth="2" /><Dot x={11} y={12} /></>],
  ['', <><Corner c="#000" /><path d="M4 10h14M11 3v14" stroke="#000" strokeWidth="2" /></>],
];

const SnapBar = () => (
  <div className="flex w-[120px] flex-col pt-[9px] pl-[40px]">
    {SNAPS.map((s, i) =>
      s ? (
        <div key={i} className="flex h-[70px] w-[72px] items-center">
          <div className={'flex h-[68px] w-[72px] items-center justify-center ' + (s[0] === 'on' ? 'rounded-[9px] border-2 border-[#cdc7c2] bg-[#d5d0cc]' : s[0] === 'dim' ? 'opacity-25' : '')}>
            <Ico>{s[1]}</Ico>
          </div>
        </div>
      ) : (
        <HSep key={i} w="w-[72px]" />
      )
    )}
    <svg width="12" height="24" viewBox="0 0 12 24" className="mt-[83px] ml-[30px]"><path d="M0 0l12 12L0 24z" fill="#2e3436" /></svg>
  </div>
);

/* ---------- palette ---------- */
const PALETTE = [
  'bg-[#000000]', 'bg-[#1a1a1a]', 'bg-[#333333]', 'bg-[#4d4d4d]', 'bg-[#666666]', 'bg-[#808080]', 'bg-[#999999]', 'bg-[#b3b3b3]', 'bg-[#cccccc]', 'bg-[#e6e6e6]', 'bg-[#ececec]', 'bg-[#f2f2f2]', 'bg-[#f9f9f9]', 'bg-[#ffffff]',
  'bg-[#800000]', 'bg-[#ff0000]', 'bg-[#808019]', 'bg-[#ffff38]', 'bg-[#038013]', 'bg-[#00ff3a]', 'bg-[#008080]', 'bg-[#00ffff]', 'bg-[#000080]', 'bg-[#0000ff]', 'bg-[#800080]', 'bg-[#ff00ff]',
  'bg-[#2b0000]', 'bg-[#550000]', 'bg-[#800000]', 'bg-[#aa0000]', 'bg-[#d40000]', 'bg-[#ff0000]', 'bg-[#ff2a2a]', 'bg-[#ff5555]', 'bg-[#ff8080]', 'bg-[#ffaaaa]', 'bg-[#ffd5d5]',
  'bg-[#280b0b]', 'bg-[#501616]', 'bg-[#782121]', 'bg-[#a02c2c]', 'bg-[#c83737]', 'bg-[#d35f5f]', 'bg-[#de8787]', 'bg-[#e9afaf]', 'bg-[#f4d7d7]',
  'bg-[#241c1c]', 'bg-[#483737]', 'bg-[#6c5353]', 'bg-[#916f6f]', 'bg-[#ac9393]', 'bg-[#c8b7b7]', 'bg-[#e3dbdb]',
  'bg-[#2b1100]', 'bg-[#552200]', 'bg-[#803408]', 'bg-[#aa4507]', 'bg-[#d4560e]', 'bg-[#ff6812]', 'bg-[#ff8033]', 'bg-[#ff995a]', 'bg-[#ffb383]', 'bg-[#ffccaa]', 'bg-[#ffe6d5]', 'bg-[#28170b]', 'bg-[#502d16]',
];

const Palette = () => (
  <div className="flex h-[70px] shrink-0 pt-[2px] pl-[2px]">
    <div className="w-[2516px]">
      <div className="flex h-[42px] overflow-hidden">
        <svg width="38" height="42" className="shrink-0 bg-white"><path d="M0 0l38 42M38 0 0 42" stroke="#7a1414" strokeWidth="3" /></svg>
        {PALETTE.map((c, i) => (
          <div key={i} className={'h-full w-[38px] shrink-0 ' + c} />
        ))}
      </div>
      <div className="h-[26px] border-t-2 border-[#cdc7c2] bg-[#cecece] pt-[6px] pl-[6px]">
        <div className="h-[12px] w-[372px] rounded-full bg-[#7e8281]" />
      </div>
    </div>
    <svg width="12" height="24" viewBox="0 0 12 24" className="mt-[22px] ml-[30px]"><path d="M12 0 0 12l12 12z" fill="#2e3436" /></svg>
  </div>
);

/* ---------- status bar ---------- */
const StatusBar = () => (
  <div className="flex h-[70px] shrink-0 items-center bg-linear-to-b from-[#f6f5f4] to-[#dad9d7] font-['Liberation_Sans'] text-[24px] text-[#2e3436]">
    <div className="-mt-[3px] flex w-[80px] flex-col items-end leading-[33px]"><span>Fill:</span><span>Stroke:</span></div>
    <div className="-mt-[3px] flex w-[222px] flex-col pl-[62px] leading-[33px]"><span>N/A</span><span>N/A</span></div>
    <span className="w-[31px]">O:</span>
    <div className="opacity-60"><Spin w="w-[134px]" btn="w-[34px]" value="100" dim /></div>
    <div className="flex w-[68px] justify-center"><div className="h-[68px] w-[2px] bg-[#cfccc9]" /></div>
    <Ico s={34} className="-ml-[12px]">
      <path d="M1 19Q17 3 33 19 29 31 17 31T1 19z" fill="#fff" stroke="#000" strokeWidth="2" />
      <circle cx="17" cy="20" r="9" fill="#777" stroke="#000" strokeWidth="1.600" /><circle cx="17" cy="20" r="6" fill="#000" /><circle cx="15" cy="17" r="2" fill="#fff" />
      <path d="M5 14 1 8M10 10 7 2M17 9V0M24 10l3-8M29 14l4-6" stroke="#000" strokeWidth="2" />
    </Ico>
    <div className="flex w-[91px] justify-center pl-[19px]"><Padlock s={34} /></div>
    <div className="flex h-[68px] w-[103px] items-center justify-center gap-[9px] rounded-[9px] border-2 border-[#cdc7c2] bg-linear-to-b from-[#f4f3f2] to-[#dcdad8]">
      <span className="text-[23px]">•1</span>
      <svg width="24" height="14" viewBox="0 0 24 14"><path d="M0 0h24L12 13z" fill="#2e3436" /></svg>
    </div>
    <div className="w-[1165px] pl-[3px] whitespace-nowrap">No objects selected. Click, Shift+click, Alt+scroll mouse on top of objects, or drag around objects to select.</div>
    <div className="h-[68px] w-[2px] bg-[#cfccc9]" />
    <div className="-mt-[3px] flex w-[42px] flex-col pl-[20px] leading-[33px]"><span>X:</span><span>Y:</span></div>
    <div className="-mt-[3px] flex w-[88px] flex-col items-end leading-[33px]"><span>0.00</span><span>0.00</span></div>
    <span className="w-[70px] pl-[27px]">Z:</span>
    <Spin w="w-[186px]" btn="w-[43px]" value="51%" align="justify-center pr-[7px]" />
    <span className="w-[66px] pl-[22px]">R:</span>
    <Spin w="w-[200px]" btn="w-[43px]" value="0.00°" align="justify-center" />
  </div>
);

/* ---------- main window ---------- */
const InkscapeWindow = () => (
  <div className="absolute top-[50px] left-0 flex h-[1640px] w-[2592px] flex-col overflow-hidden rounded-[20px] bg-[#f6f5f4]">
    <div className="flex h-[57px] shrink-0 items-center border-b-2 border-[#d0cacc] bg-[#f9eff3] pl-[16px]">
      <div className="flex gap-[16px]">
        <div className="h-[24px] w-[24px] rounded-full bg-[#ff5f57]" />
        <div className="h-[24px] w-[24px] rounded-full bg-[#ffbd3c]" />
        <div className="h-[24px] w-[24px] rounded-full bg-[#25c946]" />
      </div>
      <div className="flex-1 pr-[122px] pb-[1px] text-center font-['Inter'] text-[26.300px] font-bold text-[#4b474a]">laserskurdur2.dxf - Inkscape</div>
    </div>
    <CommandBar />
    <ControlsBar />
    <div className="-mt-[1px] flex h-[1278px] shrink-0">
      <Toolbox />
      <div className="flex w-[2366px] flex-col">
        <div className="flex h-[54px] shrink-0 items-start">
          <div className="flex h-[54px] w-[36px] items-center">
            <SmallButton h="h-[52px]">
              <Ico s={28}>
                <path d="M6 11V8q1-7 8-7t8 7v3" stroke="#000" strokeWidth="2.200" />
                <path d="M2 11h24v17H2z" fill="url(#lockFace)" stroke="#000" strokeWidth="2.200" />
                <path d="M14 15a2.500 2.500 0 0 1 1.300 4.600V24h-2.600v-4.400A2.500 2.500 0 0 1 14 15z" fill="#000" />
              </Ico>
            </SmallButton>
          </div>
          <HRuler />
          <div className="flex h-[54px] w-[36px] items-center">
            <SmallButton h="h-[52px]">
              <Ico s={24}>
                <rect x="1" y="1" width="22" height="22" rx="3" fill="#f2f2f1" stroke="#9a9a98" strokeWidth="1.600" />
                <path d="M7 9l5-4h3v10h2v4H9v-4h2v-5H7z" fill="#fff" stroke="#888" strokeWidth="1.200" />
              </Ico>
            </SmallButton>
          </div>
        </div>
        <div className="flex h-[1172px] shrink-0">
          <VRuler />
          <Canvas />
          <div className="w-[36px] bg-[#cecece] pt-[374px] pl-[12px]"><div className="h-[422px] w-[12px] rounded-full bg-[#7e8281]" /></div>
        </div>
        <div className="flex h-[52px] pl-[36px]">
          <div className="w-[2294px] bg-[#cecece] pt-[20px] pl-[274px]"><div className="h-[12px] w-[1858px] rounded-full bg-[#7e8281]" /></div>
          <SmallButton h="h-[51px]">
            <Ico s={28}>
              <foreignObject x="0" y="0" width="28" height="30">
                <div className="h-[30px] w-[28px] bg-[conic-gradient(from_90deg_at_45%_60%,#ff1030,#ff00d0,#3010ff,#00c0ff,#00ff70,#30ff20,#ffff20,#ff1030)] [clip-path:polygon(4%_0%,22%_2%,100%_66%,28%_98%,8%_70%)]" />
              </foreignObject>
              <path d="M1 2q2-3 6 0l20 18-19 9Q0 20 1 2z" stroke="#111" strokeWidth="1.600" />
            </Ico>
          </SmallButton>
        </div>
      </div>
      <SnapBar />
    </div>
    <Palette />
    <StatusBar />
  </div>
);

/* ---------- background windows ---------- */
const Person = () => (
  <Ico s={32}>
    <path d="M2 31q0-8 10-11h8q10 3 10 11z" fill="#d8d8d8" stroke="#111" strokeWidth="2" />
    <ellipse cx="16" cy="11" rx="7" ry="10" fill="#f4f4f4" stroke="#111" strokeWidth="2" />
  </Ico>
);

const SideTab = ({ h, children }) => (
  <div className={'flex items-center justify-center border-b-[3px] border-[#232934] bg-[#2c3241] ' + h}>
    <span className="-ml-[6px] rotate-180 text-[25px] whitespace-nowrap text-[#d2d4d9] [-webkit-text-stroke:0.5px_#d2d4d9] [writing-mode:vertical-rl]">{children}</span>
  </div>
);

const ScaleMark = ({ children }) => (
  <Ico s={36}>
    <path d="M16 2q4 5 4 13l8 12v5q-5-7-9-8h-6q-4 1-9 8v-5l8-12q0-8 4-13z" fill="#d2d2d4" transform="translate(1 2)" />
    {children}
  </Ico>
);

const AutocadWindow = () => (
  <div className="absolute top-[50px] right-0 flex h-[1640px] w-[900px] flex-col overflow-hidden rounded-[20px] bg-[#212830] font-['Liberation_Sans']">
    <div className="flex h-[118px] shrink-0 justify-end border-b-2 border-[#10141a] bg-[#eee8ea] pr-[2px]">
      <div className="flex h-[44px] w-[238px] items-center border-2 border-t-0 border-[#272c3b] bg-[#4d5a73] pl-[6px] font-['Noto_Sans'] text-[25px] text-[#eceef2]">
        <Person />
        <span className="flex-1 pt-[3px] pl-[11px]">Sign In</span>
        <svg width="12" height="9" viewBox="0 0 12 9" className="mr-[8px]"><path d="M0 0h12L6 9z" fill="#dcdcdc" /></svg>
      </div>
    </div>
    <div className="flex h-[45px] shrink-0 justify-end border-b-2 border-[#222932] bg-[#384454]">
      <div className="flex w-[49px] items-center justify-center border-l-2 border-[#222932]">
        <Ico s={14}><path d="M6 0 1 7l5 7M13 0 8 7l5 7" stroke="#9ba3ae" strokeWidth="1.800" /></Ico>
      </div>
    </div>
    <div className="flex flex-1 justify-end">
      <div className="w-[45px]">
        <SideTab h="h-[476px]">Layers and Properties</SideTab>
        <SideTab h="h-[475px]">Reference Manager</SideTab>
        <SideTab h="h-[477px]">Blocks</SideTab>
      </div>
    </div>
    <div className="flex h-[46px] shrink-0 items-center justify-end bg-[#364150] pr-[14px]">
      <div className="flex h-[42px] w-[60px] items-center justify-end bg-[#5280ae] pr-[3px]"><ScaleMark><circle cx="29" cy="9" r="6" fill="#dcdcde" /></ScaleMark></div>
      <div className="flex w-[42px] justify-end"><ScaleMark><path d="M31 2 22 13h6l-3 9 10-12h-6z" fill="#f6c566" /></ScaleMark></div>
      <div className="flex w-[47px] justify-end"><ScaleMark /></div>
      <span className="pl-[4px] font-['Noto_Sans'] text-[24px] text-[#9fa3a8]">1:1</span>
      <svg width="12" height="8" viewBox="0 0 12 8" className="ml-[8px]"><path d="M0 0h12L6 8z" fill="#d8d8d8" /></svg>
      <Ico s={34} className="ml-[15px]"><path d="M2 3h12v12H2zM15 22l7 11H8z" stroke="#d4d4d6" strokeWidth="2.400" /><circle cx="26" cy="16" r="6" stroke="#d4d4d6" strokeWidth="2.400" /></Ico>
      <Ico s={32} className="ml-[10px]">
        <circle cx="16" cy="16" r="8" stroke="#dcdcdc" strokeWidth="6" />
        <circle cx="16" cy="16" r="13" stroke="#dcdcdc" strokeWidth="5" strokeDasharray="5.100 5.110" />
      </Ico>
    </div>
  </div>
);

const FinderWindow = () => (
  <div className="absolute top-[404px] left-[2100px] flex h-[872px] w-[660px] flex-col overflow-hidden rounded-[20px] bg-white shadow-[0_20px_60px_rgba(0,0,0,0.35)]">
    <div className="flex h-[105px] shrink-0 items-center justify-end border-b-2 border-[#d9d3d3] bg-[#efe9e9] pr-[37px] pb-[1px]">
      <Ico s={34}><path d="m8 3 7 5-7 5-7-5zM24 3l7 5-7 5-7-5zM8 13l7 5-7 5-7-5zM24 13l7 5-7 5-7-5zM16 20l7 5-7 5-7-5z" fill="#989192" /></Ico>
      <Ico s={18} className="ml-[10px]"><path d="m2 6 7 7 7-7" stroke="#8f8889" strokeWidth="3" strokeLinecap="round" /></Ico>
      <Ico s={32} className="ml-[44px]"><circle cx="13" cy="13" r="11.500" stroke="#aaa4a4" strokeWidth="2.600" /><path d="m21 21 10 10" stroke="#aaa4a4" strokeWidth="3" strokeLinecap="round" /></Ico>
    </div>
    <div className="flex-1 border-r-2 border-[#e2e2e2]">
      <svg width="580" height="410" viewBox="2100 509 580 410" fill="none">
        <path d="M2450 520h100l129 90.600V913h-229z" fill="url(#redDoc)" />
        <path d="M2500 540h60l99 80v200h-159z" fill="url(#paper)" />
        <path d="M2500 600h159v164q-40-16-99-26h-60z" fill="#f0ded3" />
        <path d="M2592 706l23 85-11 4-12-30z" fill="#8d1d22" /><path d="M2592 765l12 30h-12z" fill="#c96a66" />
        <path d="M2592 546l87 64.600L2609 633 2590 560z" fill="url(#redFold)" />
      </svg>
      <div className="mt-[161px] h-[2px] bg-[#e2e2e2]" />
      <div className="h-[138px]" />
    </div>
    <div className="h-[56px] border-t-2 border-[#dedede]" />
  </div>
);

/* ---------- dock ---------- */
const Sq = ({ f }) => <rect width="60" height="60" rx="13.500" fill={f} />;
const Petals = () =>
  ['#f98a1c', '#f5c51c', '#9dc93c', '#52b07c', '#5aa0dc', '#6a78c8', '#b05fa8', '#ee4b4b'].map((c, i) => (
    <ellipse key={c} cx="30" cy="16" rx="8" ry="12" fill={c} opacity=".85" transform={`rotate(${i * 45} 30 30)`} />
  ));
const AGlyph = () => (
  <>
    <path d="M32 8h12l16 52q0 3-6 3h-4L37 22 22 63h-9z" fill="url(#acad)" />
    <path d="m18 46 31-11 3 9-33 9z" fill="#a81c22" />
  </>
);

const DOCK = [
  [{ run: 1 },
    <><Sq f="url(#finderR)" /><path d="M34 0H13.500Q0 0 0 13.500v33Q0 60 13.500 60H38q-5-10-4-20h-9Q24 20 34 0z" fill="url(#finderL)" /><path d="M16 17v6M44 17v6" stroke="#123" strokeWidth="3" strokeLinecap="round" /><path d="M11 40q19 15 38 0" stroke="#123" strokeWidth="2.200" strokeLinecap="round" /></>],
  [{},
    <><Sq f="url(#siriBg)" /><circle cx="30" cy="30" r="26" fill="url(#siri)" opacity=".85" /><circle cx="30" cy="30" r="26" stroke="#b9a6d8" strokeWidth="1" /><path d="M6 22Q18 2 40 8q10 4 13 12-12-6-22 8Q18 18 6 22z" fill="#d8347c" opacity=".75" /><path d="M7 38q12 18 30 15 14-5 17-16-14 2-24-7-10 6-23 8z" fill="#2aa7a0" opacity=".7" /><path d="M30 29 12 32q10-6 16-4 2-8 4-3l16-5-14 9 12 10-16-6 2 20-5-19-14 8z" fill="#d8fbff" opacity=".9" /></>],
  [{},
    <><Sq f="url(#launch)" />{['#5bd75b', '#fbbf2a', '#fb8c1e', '#e8352c', '#a0a4aa', '#f8364f', '#b44fd8', '#2d9bf0', '#35c4a0'].map((c, i) => (<rect key={c} x={9.500 + (i % 3) * 14.500} y={10 + Math.floor(i / 3) * 14.500} width="11.500" height="11.500" rx="2.500" fill={c} />))}</>],
  [{ run: 1 },
    <><Sq f="url(#white)" /><circle cx="30" cy="30" r="26" fill="url(#safari)" /><circle cx="30" cy="30" r="23.500" stroke="#cfe8fc" strokeWidth="3" strokeDasharray=".8 1.660" /><path d="M47 14 33.500 33.500 26.500 26.500z" fill="#ff3b30" /><path d="M13 47 26.500 26.500l7 7z" fill="#f4f4f4" /></>],
  [{},
    <><Sq f="url(#mail)" /><rect x="9" y="17" width="42" height="27" rx="4" fill="url(#white)" /><path d="m11 19 16 14q3 2 6 0l16-14M11 42l13-13M49 42 36 29" stroke="#a8adb5" strokeWidth="1.500" /></>],
  [{},
    <><path d="M54 8h7v12h-7z" fill="#9aa" /><path d="M54 21h7v10h-7z" fill="#3fa0f0" /><path d="M54 33h7v9h-7z" fill="#f58a1f" /><path d="M54 44h7v10h-7z" fill="#4cc84c" /><rect width="58" height="60" rx="11" fill="url(#brown)" /><circle cx="30" cy="30" r="19" stroke="#86643a" strokeWidth="1.500" fill="#a98049" /><circle cx="30" cy="26" r="7" fill="#8b6a3c" /><path d="M17 43q2-9 13-9t13 9q-12 11-26 0z" fill="#8b6a3c" /></>],
  [{},
    <><Sq f="#fbfbfb" /><path d="M0 19v-5.500Q0 0 13.500 0h33Q60 0 60 13.500V19z" fill="#f5483e" /><text x="30" y="14.500" textAnchor="middle" fontSize="12.500" fontWeight="700" fill="#fff" fontFamily="Inter">FEB</text><text x="29.500" y="51" textAnchor="middle" fontSize="35" fontWeight="300" fill="#222" letterSpacing="-1" fontFamily="Inter">16</text></>],
  [{},
    <><Sq f="#f5f4f1" /><path d="M0 16v-2.500Q0 0 13.500 0h33Q60 0 60 13.500V16z" fill="url(#note)" /><path d="M2 18.500h56" stroke="#bbb" strokeWidth="1.500" strokeDasharray="1.500 1.500" /><path d="M0 30h60M0 44h60" stroke="#d8d7d4" strokeWidth="1.400" /></>],
  [{},
    <><Sq f="#fbfbfb" />{['#1478f2', '#f23c32', '#f5921e'].map((c, i) => (<g key={c}><circle cx="12.500" cy={15 + i * 15} r="3.200" fill={c} /><circle cx="12.500" cy={15 + i * 15} r="4.800" stroke={c} strokeWidth="1" /><path d={`M23 ${15 + i * 15}h31`} stroke="#cfcfcf" strokeWidth="1.500" /></g>))}</>],
  [{},
    <><clipPath id="mapClip"><rect width="60" height="60" rx="13.500" /></clipPath><g clipPath="url(#mapClip)"><Sq f="#f4f2ea" /><path d="M28 0h32v30Q36 30 28 0z" fill="#7fdc68" /><path d="M44 0q2 14 16 18" stroke="#fff" strokeWidth="6" /><path d="M0 10l60 42-4 8L28 42 0 24z" fill="#fbc935" /><path d="M0 30l12 4v26H0z" fill="#f4a0b0" /><path d="M14 0v30" stroke="#1a76e8" strokeWidth="8" /></g><circle cx="15" cy="36" r="9" fill="#1a76e8" stroke="#fff" strokeWidth="4" /><path d="M33 40q12-4 24 0v8q-2 8-12 11-10-3-12-11z" fill="#2d62b8" stroke="#fff" strokeWidth="1.500" /><path d="M34 40.500q11-4 22 0v3H34z" fill="#e02b2b" /><text x="45" y="52" textAnchor="middle" fontSize="8" fontWeight="700" fill="#fff" fontFamily="Inter">280</text></>],
  [{ badge: '1' }, <><Sq f="#fbfbfb" /><Petals /></>],
  [{ badge: '1' }, <><Sq f="url(#green)" /><ellipse cx="30" cy="28" rx="21" ry="18" fill="url(#white)" /><path d="M16 38q1 7-5 10 8 1 13-4z" fill="#e9f2ea" /></>],
  [{ badge: '1' }, <><Sq f="url(#green)" /><rect x="9" y="17" width="29" height="26" rx="7" fill="url(#white)" /><path d="M40 26l8-6q2-1 2 2v17q0 2-2 1l-8-6z" fill="#e4ede6" /></>],
  [{}, <><path d="M0 4 46-4l12 60-50 7z" fill="#fbfbfb" /><path d="M0 4 46-4l2 10L3 14z" fill="url(#pagesHead)" /><text x="6" y="11" fontSize="8" fill="#fff" fontFamily="Inter" transform="rotate(-8 6 11)">PAGES</text><path d="m7 20 22-3 3 14-22 4z" fill="#2a8ff0" /><path d="m13 21 11-1-4 10-3 1z" fill="#f5a623" /><path d="M33 17l16-2M34 22l14-2M35 27l11-2M12 41l33-5M13 46l30-4M14 51l28-4M15 56l22-3" stroke="#b5b5b5" strokeWidth="1.400" strokeDasharray="3 1" /><path d="m53-4 4 2L40 46l-5-2z" fill="#f6a52a" stroke="#c97d12" /><path d="m40 46-5-2-1 19z" fill="#333" /></>],
  [{}, <><path d="M-1 34h62v26H-1z" fill="#f4f4f4" /><path d="M8 30h9v24H8z" fill="#f5405a" /><path d="M21 18h9v36h-9z" fill="#fb8c1e" /><path d="M33 0h9v54h-9z" fill="#2fb84c" /><path d="M46 10h9v44h-9z" fill="#2e95f4" /><path d="M2 37v18" stroke="#999" strokeDasharray="1 4" /></>],
  [{}, <><path d="M4-2h52l4 24H1z" fill="url(#keynote)" /><path d="M1 22h59v3H1z" fill="#0a6cc4" /><path d="M14 2h34l1 17H12z" fill="#fbfbfb" /><circle cx="23" cy="12" r="5.500" fill="#37b6f4" /><path d="M23 12V6.500a5.500 5.500 0 0 1 5 7z" fill="#f4478a" /><path d="M23 12l5 2a5 5 0 0 1-6 3z" fill="#6fd34c" /><path d="M34 8h10M34 12h10M34 16h8" stroke="#bbb" /><path d="M29 25h4v32h-4z" fill="#c9d4de" /><ellipse cx="30" cy="58.500" rx="14" ry="5" fill="#bcd7e6" opacity=".95" /></>],
  [{}, <><Sq f="url(#music)" /><path d="M44 10v29a6.500 6 0 1 1-4-5V20l-16 4v21a6.500 6 0 1 1-4-5V15z" fill="#fff" /></>],
  [{}, <><Sq f="url(#pod)" /><circle cx="30" cy="27" r="5" fill="#fff" /><path d="M26 36q4-3 8 0l-1 15q-3 3-6 0z" fill="#fff" /><path d="M20 40a16 16 0 1 1 20 0M22 34a10.500 10.500 0 1 1 16 0M17 45a21 21 0 1 1 26 0" stroke="#fff" strokeWidth="2.200" /></>],
  [{}, <><Sq f="url(#store)" /><path d="M34 12 18 39M26 12l16 27M10 37h22M38 37h12M16 43l-2 4M44 43l2 4" stroke="#f4f8ff" strokeWidth="4.600" strokeLinecap="round" /></>],
  [{ badge: '1' }, <><Sq f="url(#gear)" /><circle cx="30" cy="30" r="25" fill="#3a3c40" /><circle cx="30" cy="30" r="24.500" stroke="#1e2022" strokeWidth="3" strokeDasharray="2.500 2" /><circle cx="30" cy="30" r="18" stroke="#9a9ca0" strokeWidth="3" /><path d="M30 30h18M30 30l-9 15.600M30 30l-9-15.600" stroke="#a8aaae" strokeWidth="3" /><circle cx="30" cy="30" r="4.500" fill="#46484c" stroke="#a8aaae" strokeWidth="2" /></>],
  [{ run: 1 }, <g transform="translate(-7 -7)"><path d="M0 0h74v74H0z" fill="#faf1ed" /><path d="M3 45l68 20v6H3z" fill="#f4dfd6" /><AGlyph /></g>],
  [{}, <><path d="M-7 36 8 30q12-12 24-30L20 42 10 48z" fill="#3f8fc4" /><path d="M43-4q6 0 12 20t11 38q-5-9-10-9-8 2-18 17-3-12-15-18Q35 24 43-4z" fill="url(#matlab)" /><path d="M43-4Q50 30 38 62q10-16 14-17-2-26-9-49z" fill="#f5a030" opacity=".7" /></>],
  [{}, <><rect x="-2" y="-3" width="65" height="66" rx="19" fill="url(#zoom)" /><rect x="10" y="19" width="28" height="23" rx="6" fill="#fff" /><path d="m40 27 8-6q2-1 2 1v17q0 2-2 1l-8-5z" fill="#fff" /></>],
  [{ run: 1, badge: '2514' }, <><path d="M16 2h42v30H16z" fill="#0c62b4" /><path d="M14 22h46v36H16z" fill="#28a8ea" /><path d="M14 58 60 24v34z" fill="#1790df" /><path d="M-2 13h34v34H-2z" fill="#0f6cc0" /><ellipse cx="15" cy="30" rx="7" ry="8.500" stroke="#fff" strokeWidth="4" /></>],
  [{}, <><Sq f="#fdfdfd" /><g strokeWidth="8.500" strokeLinecap="round"><path d="M25 13v1M13 24.500h12" stroke="#36c5f0" /><path d="M36 13v11.500M47 24.500h0.100" stroke="#2eb67d" /><path d="M36 36h11.500M36 47v0.100" stroke="#ecb22e" /><path d="M25 36v11.500M13 36h0.100" stroke="#e01e5a" /></g></>],
  [{}, <><path d="M30-3A33 33 0 1 1 12 58" stroke="#3fb034" strokeWidth="10" /><path d="M12 58A33 33 0 0 1 30-3" stroke="#3fb034" strokeWidth="9" strokeDasharray="4.500 1.500" /></>],
  [{ run: 1 }, <><Sq f="#fdfdfd" /><path d="M40 9v12L14 43l-5-4zM40 52V40L14 17l-5 4z" fill="#0b6fbe" /><path d="M40 9 51 14v32l-11 6z" fill="#27a5f2" /></>],
  [{}, <><Sq f="url(#git)" /><path d="M30 5a25 25 0 0 0-8 48.500q2 .2 2-1.500v-5q-7 1-9-4-1-2-3-4 3-1 5 2 3 4 7 2 0-2 1.500-3.500Q15 38 15 27q0-4 2.500-7-1-3 .3-7 4 0 7.200 3 5-1.300 10 0 3.200-3 7.200-3 1.300 4 .3 7 2.500 3 2.500 7 0 11-10.500 12.500Q36 41 36 44v8q0 1.700 2 1.500A25 25 0 0 0 30 5z" fill="#f6f2fa" /></>],
];
const DOCK_RECENT = [
  [{ run: 1 }, <><rect x="0" y="0" width="60" height="60" rx="13" fill="#c2d4d4" /><rect x="2" y="2" width="56" height="56" rx="12" fill="#1b1b1c" /><path d="m10 12 6 4-6 4M19 22h9" stroke="#fff" strokeWidth="2.200" /></>],
  [{ run: 1 }, <><rect x="1" y="4" width="59" height="56" rx="13" fill="#d8bf55" /><path d="M0 14Q0 0 14 0h32q14 0 14 14v24Q52 56 38 56H14Q0 56 0 42z" fill="url(#sticky)" /><path d="M60 36q-4 18-22 20 10-6 9-13 10 0 13-7z" fill="#e8d26a" /><path d="M10 20q4-14 6-8t2 7q4-6 8-1t8-1h16M10 29h40M10 40h22" stroke="#c9ae3c" strokeWidth="2.200" /></>],
  [{ run: 1 }, <><Sq f="url(#fusion)" /><path d="M18 6h27v9H30v10h13v9H30v13H18z" fill="url(#fusionF)" /><text x="40.500" y="56" textAnchor="middle" fontSize="10.500" fill="#e8821e" fontFamily="Inter">360</text></>],
  [{ run: 1 }, <><Sq f="#fdfdfd" /><path d="M30 4 55 30q-2 5-12 5 0 4 4 6l-6 5-8 8-4-4 1-6-9-4 6-3Q6 36 5 31z" fill="#0c0d10" /><path d="M30 5l13 13-5 2-4-3-4 4-5-3-6 1z" fill="#eef1f6" /><path d="M15 46q4-2 6 1-4 3-6-1zM43 46q4-1 7 1-3 3-7-1z" fill="#111" /></>],
];
const DOCK_END = [
  [{}, <><path d="M8-6h24l20 20v48H8z" fill="#fbfbfb" /><path d="M4-2h26v14l20 4v46H4z" fill="#f6f6f7" /><path d="M32-6l20 20q-16 0-18-4z" fill="#e2e2e5" stroke="#c4c4c8" /><path d="M14 23h30v31H14z" fill="#a4adb3" /><path d="M18 24h16v5H18z" fill="#444" /><circle cx="29" cy="39" r="9" fill="#c9d0d5" /><path d="M14 48h30v6H14z" fill="#7c858c" /></>],
  [{}, <><path d="M4 2h52l-7 56q-1 5-19 5T11 58z" fill="url(#trash)" opacity=".92" /><path d="M5 6q4-10 12-9l8 3 8-5 8 5 8-2q6 3 6 8-24 6-50 0z" fill="#e7e4ea" stroke="#999" /><path d="m16 0 6 8-10-2zM34-2l8 9-9-2z" fill="#444" /><path d="m24 2 6 4-7 2z" fill="#3fb0e8" /><path d="m42 2 5 4-7 1z" fill="#e0523a" /></>],
];

const DockItem = ({ o, children }) => (
  <div className="relative flex w-[78.750px] shrink-0 flex-col items-center">
    <Ico s={60}>{children}</Ico>
    {o.run && <div className="mt-[9px] h-[8px] w-[8px] rounded-full bg-[#0b0b2e]" />}
    {o.badge && (
      <div className={'absolute -top-[8px] flex h-[29px] items-center justify-center rounded-full bg-[#f43d37] font-[\'Inter\'] text-[18px] text-white shadow-[0_1px_3px_rgba(0,0,0,0.3)] ' + (o.badge === '1' ? 'left-[50px] w-[29px]' : 'left-[29px] w-[48px]')}>{o.badge}</div>
    )}
  </div>
);
const DockRule = () => (
  <div className="flex w-[35.500px] shrink-0 justify-center"><div className="-mt-[3px] h-[72px] w-[2px] bg-[#5f477c]" /></div>
);

const Dock = () => (
  <div className="absolute top-[1694px] left-[60px] flex h-[96px] w-[2760px] rounded-[26px] border-2 border-white/25 bg-linear-to-r from-[#5c7ba1] via-[#7b77aa] via-50% to-[#b377ab] pt-[13px] pl-[3px] shadow-[0_0_0_1px_rgba(20,20,50,0.25)]">
    {DOCK.map(([o, c], i) => <DockItem key={i} o={o}>{c}</DockItem>)}
    <DockRule />
    {DOCK_RECENT.map(([o, c], i) => <DockItem key={i} o={o}>{c}</DockItem>)}
    <DockRule />
    {DOCK_END.map(([o, c], i) => <DockItem key={i} o={o}>{c}</DockItem>)}
  </div>
);

export default function App() {
  return (
    <div className="relative h-[1800px] w-[2880px] overflow-hidden bg-linear-to-r from-[#10406c] via-[#2a4270] via-60% to-[#554a7c]">
      <Defs />
      <div className="absolute top-0 left-0 h-[120px] w-[582px] bg-[#c5264f]" />
      <div className="absolute top-0 left-[582px] h-[90px] w-[2298px] bg-linear-to-r from-[#12405c] to-[#2a8fd8]" />
      <div className="absolute right-0 bottom-0 h-[180px] w-[260px] bg-linear-to-b from-[#8a2c52] from-40% to-[#4c4a80]" />
      <AutocadWindow />
      <FinderWindow />
      <div className="absolute top-[50px] left-0 h-[1640px] w-[2592px] rounded-[20px] shadow-[0_0_0_1px_rgba(0,0,0,0.25),0_36px_100px_rgba(0,0,0,0.55)]" />
      <InkscapeWindow />
      <MenuBar />
      <FileMenu />
      <Dock />
    </div>
  );
}
